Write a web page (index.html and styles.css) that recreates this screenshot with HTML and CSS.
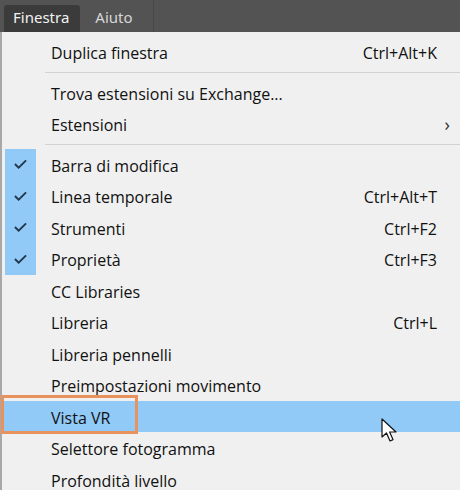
FILE: index.html
```html
<!DOCTYPE html>
<html lang="it">
<head>
<meta charset="utf-8">
<title>Finestra menu</title>
<link rel="stylesheet" href="styles.css">
</head>
<body>
<div class="menubar">
  <div class="tab active">Finestra</div>
  <div class="tab">Aiuto</div>
  <div class="bar-divider"></div>
</div>
<div class="menu">
  <div class="row"><span class="check"></span><span class="label">Duplica finestra</span><span class="key">Ctrl+Alt+K</span></div>
  <div class="sep"></div>
  <div class="row"><span class="check"></span><span class="label">Trova estensioni su Exchange...</span></div>
  <div class="row"><span class="check"></span><span class="label">Estensioni</span><span class="arrow">&#x203A;</span></div>
  <div class="sep"></div>
  <div class="row"><span class="check on"><svg viewBox="0 0 14 10" class="tick"><path d="M1 5 L5 9 L13 1"/></svg></span><span class="label">Barra di modifica</span></div>
  <div class="row"><span class="check on"><svg viewBox="0 0 14 10" class="tick"><path d="M1 5 L5 9 L13 1"/></svg></span><span class="label">Linea temporale</span><span class="key">Ctrl+Alt+T</span></div>
  <div class="row"><span class="check on"><svg viewBox="0 0 14 10" class="tick"><path d="M1 5 L5 9 L13 1"/></svg></span><span class="label">Strumenti</span><span class="key">Ctrl+F2</span></div>
  <div class="row"><span class="check on"><svg viewBox="0 0 14 10" class="tick"><path d="M1 5 L5 9 L13 1"/></svg></span><span class="label">Proprietà</span><span class="key">Ctrl+F3</span></div>
  <div class="row"><span class="check"></span><span class="label">CC Libraries</span></div>
  <div class="row"><span class="check"></span><span class="label">Libreria</span><span class="key">Ctrl+L</span></div>
  <div class="row"><span class="check"></span><span class="label">Libreria pennelli</span></div>
  <div class="row"><span class="check"></span><span class="label">Preimpostazioni movimento</span></div>
  <div class="row hover"><span class="check"></span><span class="label">Vista VR</span></div>
  <div class="row"><span class="check"></span><span class="label">Selettore fotogramma</span></div>
  <div class="row"><span class="check"></span><span class="label">Profondità livello</span></div>
  <div class="callout"></div>
  <svg class="cursor" viewBox="0 0 18 26" width="18" height="26"><path d="M1 1 L1 19 L5.5 15 L9 23 L12 21.6 L8.6 14 L15 14 Z" fill="#fff" stroke="#111" stroke-width="1.2" stroke-linejoin="round"/></svg>
</div>
</body>
</html>
```
FILE: styles.css
```css
html, body {
  margin: 0;
  padding: 0;
}
body {
  width: 460px;
  height: 490px;
  overflow: hidden;
  background: #f0f0f0;
  font-family: "Open Sans", "Noto Sans", "DejaVu Sans", sans-serif;
  font-size: 16px;
  color: #111;
}
.menubar {
  height: 32px;
  background: #535353;
  display: flex;
  align-items: flex-end;
  padding-left: 4px;
  box-sizing: border-box;
}
.tab {
  height: 27px;
  line-height: 25px;
  padding: 0 9px;
  color: #d6d6d6;
  font-family: "Noto Sans", sans-serif;
  font-size: 15px;
  border-radius: 3px 3px 0 0;
}
.tab.active {
  background: #3b3b3b;
  color: #f2f2f2;
  padding-right: 11px;
  margin-right: 6px;
}
.bar-divider {
  align-self: stretch;
  width: 1px;
  margin-left: 11px;
  background: #484848;
}
.menu {
  position: relative;
  border-left: 2px solid #a8a8a8;
  padding-top: 4px;
  height: 458px;
  box-sizing: border-box;
}
.row {
  display: flex;
  align-items: center;
  height: 31.5px;
}
.row.hover {
  background: #91c9f7;
}
.check {
  width: 31px;
  height: 100%;
  margin-left: 3px;
  display: flex;
  align-items: center;
  justify-content: center;
  flex: none;
}
.check.on {
  background: #91c9f7;
}
.tick {
  width: 13px;
  height: 10px;
  fill: none;
  stroke: #24364a;
  stroke-width: 2;
}
.label {
  padding-left: 15px;
  padding-top: 3px;
  flex: 1;
  white-space: nowrap;
}
.key {
  padding-right: 23px;
  padding-top: 3px;
  white-space: nowrap;
}
.arrow {
  padding-right: 10px;
  font-size: 18px;
  color: #333;
  line-height: 1;
}
.sep {
  height: 1px;
  background: #d2d2d2;
  margin: 4px 0 4px 43px;
}
.callout {
  position: absolute;
  left: -1px;
  top: 363px;
  width: 131px;
  height: 33px;
  border: 3px solid #e8935e;
}
.cursor {
  position: absolute;
  left: 379px;
  top: 386px;
}
```
